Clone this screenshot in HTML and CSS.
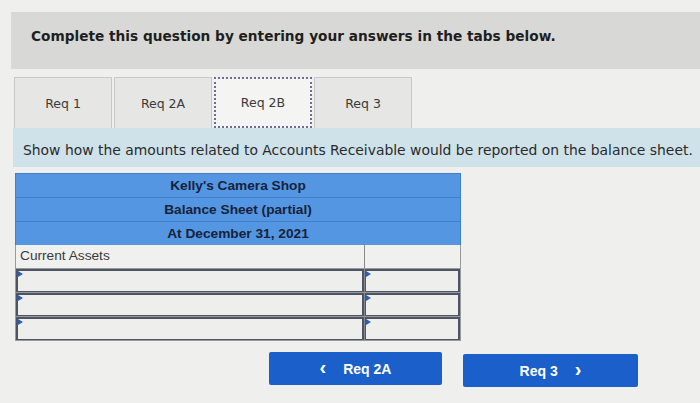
FILE: index.html
```html
<!DOCTYPE html>
<html>
<head>
<meta charset="utf-8">
<link rel="stylesheet" href="styles.css">
</head>
<body>
<div class="page">
  <div class="prompt">Complete this question by entering your answers in the tabs below.</div>
  <div class="content">
    <div class="tabs">
      <div class="tab">Req 1</div>
      <div class="tab">Req 2A</div>
      <div class="tab active">Req 2B</div>
      <div class="tab">Req 3</div>
    </div>
    <div class="instr">Show how the amounts related to Accounts Receivable would be reported on the balance sheet.</div>
    <div class="sheet">
      <div class="hrow">Kelly's Camera Shop</div>
      <div class="hrow">Balance Sheet (partial)</div>
      <div class="hrow">At December 31, 2021</div>
      <div class="row">
        <div class="lbl">Current Assets</div>
        <div class="amt"></div>
      </div>
      <div class="row">
        <div class="lbl"><div class="inp"></div></div>
        <div class="amt"><div class="inp"></div></div>
      </div>
      <div class="row">
        <div class="lbl"><div class="inp"></div></div>
        <div class="amt"><div class="inp"></div></div>
      </div>
      <div class="row">
        <div class="lbl"><div class="inp"></div></div>
        <div class="amt"><div class="inp"></div></div>
      </div>
    </div>
    <div class="nav">
      <div class="btn prev"><span class="chev">&lsaquo;</span>Req 2A</div>
      <div class="btn next">Req 3<span class="chev">&rsaquo;</span></div>
    </div>
  </div>
</div>
</body>
</html>
```
FILE: styles.css
```css
html, body {
  margin: 0;
  padding: 0;
}
body {
  background: #efefed;
  width: 700px;
  height: 403px;
  overflow: hidden;
}
.page {
  padding-top: 12px;
}
.prompt {
  margin-left: 11px;
  height: 57px;
  background: #d8d9d7;
  box-sizing: border-box;
  padding: 15px 0 0 20px;
  font-family: "DejaVu Sans", sans-serif;
  font-weight: bold;
  font-size: 13.7px;
  color: #1e1e1e;
  line-height: 18px;
}
.content {
  margin-left: 13px;
}
.tabs {
  display: flex;
  gap: 2px;
  margin-top: 8px;
  padding-left: 1px;
  height: 51px;
}
.tab {
  width: 98px;
  box-sizing: border-box;
  height: 51px;
  background: #e6e6e4;
  border: 1px solid #c9c9c7;
  border-bottom: none;
  display: flex;
  align-items: center;
  justify-content: center;
  font-family: "DejaVu Sans", sans-serif;
  font-size: 12.5px;
  color: #3a3a3a;
}
.tab.active {
  background: #f4f4f2;
  border: 2px dotted #6c6c94;
}
.instr {
  height: 39px;
  background: #cfe2ea;
  box-sizing: border-box;
  padding: 14px 0 0 10px;
  font-family: "DejaVu Sans", sans-serif;
  font-size: 13.9px;
  color: #2a2a2a;
  white-space: nowrap;
}
.sheet {
  margin: 6px 0 0 2px;
  width: 446px;
  font-family: "Liberation Sans", Arial, sans-serif;
  font-size: 13.7px;
}
.hrow {
  height: 24px;
  box-sizing: border-box;
  background: #5496e2;
  border: 1px solid #3f7fcf;
  border-bottom: none;
  text-align: center;
  font-weight: bold;
  color: #17223b;
  line-height: 23px;
}
.hrow:first-child {
  border-top: 1px solid #3f7fcf;
}
.row {
  display: flex;
  height: 24px;
  box-sizing: border-box;
  border-left: 1px solid #9a9a9a;
  border-right: 1px solid #9a9a9a;
  border-bottom: 1px solid #9a9a9a;
  background: #f0f0ee;
}
.lbl {
  width: 349px;
  border-right: 1px solid #8a8a8a;
  padding-left: 4px;
  box-sizing: border-box;
  line-height: 21px;
  color: #3a3a3a;
  position: relative;
}
.amt {
  flex: 1;
  position: relative;
}
.row .lbl:has(.inp) {
  padding-left: 0;
}
.inp {
  position: absolute;
  inset: 0;
  border: 2px solid #4d5564;
  border-bottom-width: 1px;
  background: #eeeeec;
}
.amt .inp {
  border-left-width: 1px;
}
.inp::before {
  content: "";
  position: absolute;
  left: 0;
  top: 0;
  border-left: 5px solid #2d5cb4;
  border-top: 3px solid transparent;
  border-bottom: 3px solid transparent;
}
.nav {
  display: flex;
  margin-top: 11px;
  margin-left: 256px;
  gap: 21px;
}
.btn {
  width: 173px;
  height: 33px;
  background: #1b5fcb;
  border-radius: 2px;
  color: #ffffff;
  font-family: "Liberation Sans", Arial, sans-serif;
  font-weight: bold;
  font-size: 14px;
  display: flex;
  align-items: center;
  justify-content: center;
  box-sizing: border-box;
}
.btn.next {
  width: 175px;
  margin-top: 2px;
}
.chev {
  font-size: 20px;
  line-height: 20px;
  margin-top: -3px;
}
.prev .chev {
  margin-right: 17px;
}
.next .chev {
  margin-left: 17px;
}
```
